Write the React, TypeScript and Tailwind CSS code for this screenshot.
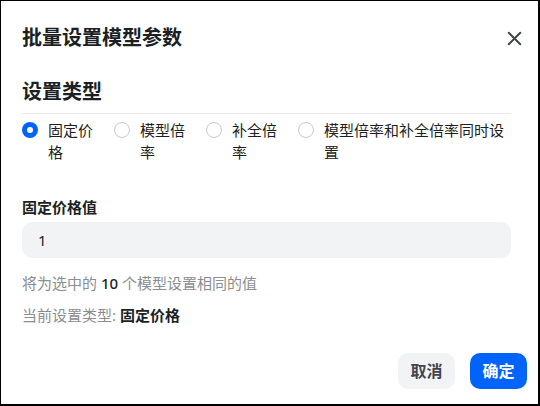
import React from 'react';
import { X } from 'lucide-react';

const options = [
  { label: '固定价格', w: 'w-[76px]' },
  { label: '模型倍率', w: 'w-[76px]' },
  { label: '补全倍率', w: 'w-[76px]' },
  { label: '模型倍率和补全倍率同时设置', w: 'flex-1' },
];

const Radio: React.FC<{ checked: boolean }> = ({ checked }) =>
  checked ? (
    <span className="mt-[3px] flex h-4 w-4 shrink-0 items-center justify-center rounded-full bg-[#0064fa]">
      <span className="h-[6px] w-[6px] rounded-full bg-white" />
    </span>
  ) : (
    <span className="mt-[3px] h-4 w-4 shrink-0 rounded-full border border-[#c6cacd] bg-white" />
  );

export default function App() {
  const selected = 0;
  return (
    <div
      className="flex h-[406px] w-[540px] flex-col border-l border-t border-r-2 border-b-2 border-black bg-white text-[#1c1f23]"
      style={{ fontFamily: '"Noto Sans", "Noto Sans CJK SC", sans-serif' }}
    >
      <div className="flex items-center justify-between pl-[21px] pr-[12px] pt-[23px]">
        <h1 className="text-[20px] font-bold leading-[28px]">批量设置模型参数</h1>
        <X size={23} strokeWidth={2.1} className="text-[#41464c]" />
      </div>

      <div className="pl-[21px] pr-[27px]">
        <div className="mt-[26px] border-b border-[#e8e9ea] pb-[7px] text-[20px] font-bold leading-[28px]">设置类型</div>
        <div className="mt-[5px] flex gap-[16px]">
          {options.map((o, i) => (
            <div key={o.label} className={`flex gap-[10px] ${o.w}`}>
              <Radio checked={i === selected} />
              <span className="text-[15px] leading-[22px] text-[#1c1f23]">{o.label}</span>
            </div>
          ))}
        </div>

        <div className="mt-[33px] text-[15px] font-bold leading-[22px]">固定价格值</div>
        <div className="mt-[4px] flex h-[36px] items-center rounded-[10px] bg-[#f2f3f4] px-[16px] text-[15px] text-[#1c1f23]">
          1
        </div>

        <p className="mt-[14px] text-[15px] leading-[22px] text-[#8b8e91]">
          将为选中的 <span className="font-medium text-[#1c1f23]">10</span> 个模型设置相同的值
        </p>
        <p className="mt-[10px] text-[15px] leading-[22px] text-[#8b8e91]">
          当前设置类型: <span className="font-bold text-[#1c1f23]">固定价格</span>
        </p>
      </div>

      <div className="mt-[27px] flex justify-end gap-[15px] pr-[11px]">
        <button className="h-[36px] w-[57px] rounded-[10px] bg-[#f2f3f4] text-[16px] font-bold text-[#41464c]">取消</button>
        <button className="h-[36px] w-[57px] rounded-[10px] bg-[#0064fa] text-[16px] font-bold text-white">确定</button>
      </div>
    </div>
  );
}
